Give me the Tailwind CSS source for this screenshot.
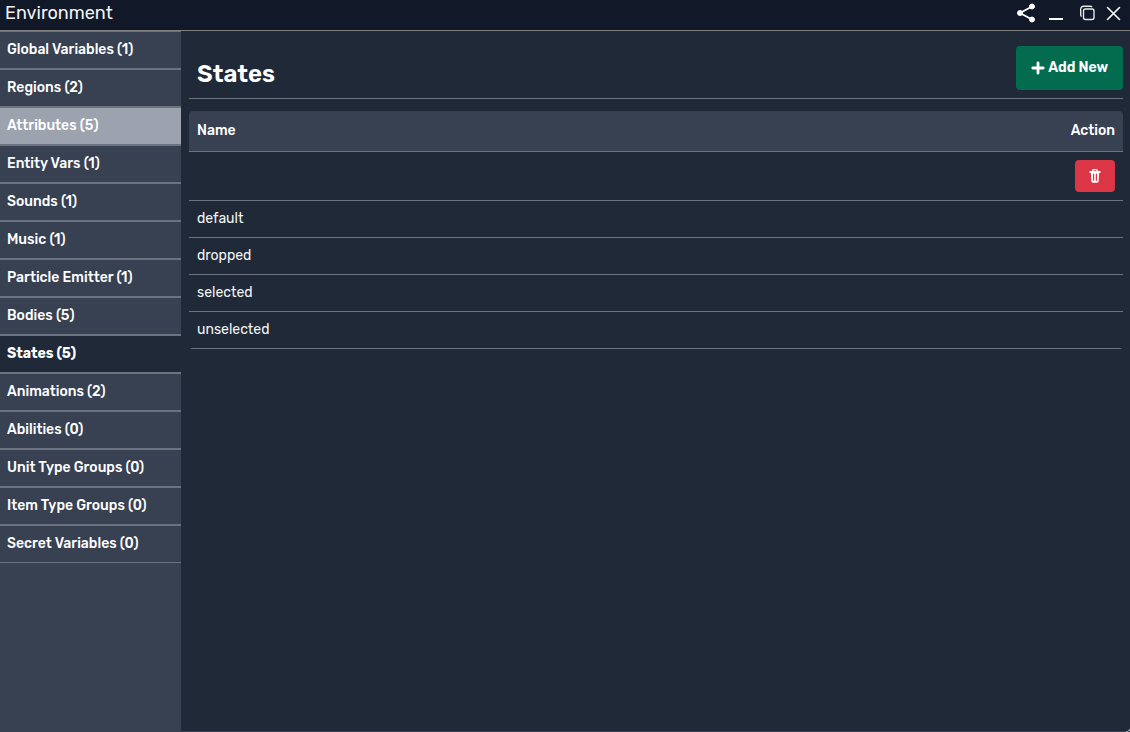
<!DOCTYPE html>
<html lang="en">
<head>
<meta charset="utf-8">
<title>Environment</title>
<script src="https://cdn.jsdelivr.net/npm/@tailwindcss/browser@4"></script>
</head>
<body class="flex min-h-screen flex-col border-b border-[#374151] bg-[#1f2937] font-['Rubik','Roboto',sans-serif] text-sm text-white">
<header class="flex h-[31px] items-center justify-between border-b border-[#808080] bg-[#111827] pr-2 pl-[5px]">
  <h1 class="pb-1 text-lg leading-6 text-gray-100">Environment</h1>
  <div class="flex items-center pb-1">
    <button type="button" aria-label="Share" class="mr-3"><svg class="h-5 w-5" viewBox="0 0 20 20" fill="white" stroke="white"><path d="M16 3.500 4 10l12 6.500" fill="none" stroke-width="1.800"/><circle cx="16" cy="3.500" r="2.500"/><circle cx="4" cy="10" r="2.500"/><circle cx="16" cy="16.500" r="2.500"/></svg></button>
    <button type="button" aria-label="Minimize" class="mr-4"><svg class="h-5 w-4" viewBox="0 0 16 20"><path d="M1 16h14" stroke="white" stroke-width="2"/></svg></button>
    <button type="button" aria-label="Maximize" class="mr-2.5"><svg class="h-4 w-4" viewBox="0 0 16 16" fill="none" stroke="#e5e7eb" stroke-width="1.4"><rect x="3.5" y="4" width="10.5" height="10.5" rx="2"/><path d="M1.5 11.5A2 2 0 0 1 .7 10V4.2a3 3 0 0 1 3-3h6.500a2 2 0 0 1 1.800 1"/></svg></button>
    <button type="button" aria-label="Close"><svg class="h-4 w-4" viewBox="0 0 16 16" stroke="white" stroke-width="1.6" stroke-linecap="round"><path d="M1.500 2.500l12 12M13.500 2.500l-12 12"/></svg></button>
  </div>
</header>
<div class="flex flex-1">
  <nav class="w-[181px] shrink-0 bg-[#374151] *:block *:h-[38px] *:border-y *:border-[#6b7280] *:pl-[7px] *:leading-9">
    <a href="#" class="font-medium">Global Variables (1)</a>
    <a href="#" class="font-medium">Regions (2)</a>
    <a href="#" class="bg-[#9ca3af] font-medium">Attributes (5)</a>
    <a href="#" class="font-medium">Entity Vars (1)</a>
    <a href="#" class="font-medium">Sounds (1)</a>
    <a href="#" class="font-medium">Music (1)</a>
    <a href="#" class="font-medium">Particle Emitter (1)</a>
    <a href="#" class="font-medium">Bodies (5)</a>
    <a href="#" class="bg-[#1f2937] font-bold" aria-current="page">States (5)</a>
    <a href="#" class="font-medium">Animations (2)</a>
    <a href="#" class="font-medium">Abilities (0)</a>
    <a href="#" class="font-medium">Unit Type Groups (0)</a>
    <a href="#" class="font-medium">Item Type Groups (0)</a>
    <a href="#" class="font-medium">Secret Variables (0)</a>
  </nav>
  <main class="min-w-0 flex-1 pr-[7px] pl-2">
    <div class="flex items-start justify-between border-b border-[#6b7280] pt-[15px] pb-2">
      <h2 class="mt-3 ml-2 text-2xl font-semibold">States</h2>
      <button type="button" class="flex h-11 items-center gap-[3px] rounded bg-[#046c4e] px-[15px] font-semibold"><svg class="h-3.5 w-3.5" viewBox="0 0 14 14"><path d="M7 1.800v10.400M1.800 7h10.400" stroke="white" stroke-width="2.800" stroke-linecap="round"/></svg>Add New</button>
    </div>
    <div class="mt-3 overflow-hidden rounded">
      <table class="w-full border-separate border-spacing-0 text-gray-100 [&_td]:border-b [&_td]:border-[#6b7280] [&_td]:px-2 [&_th]:h-[41px] [&_th]:border-b [&_th]:border-[#6b7280] [&_th]:bg-[#374151] [&_th]:px-2 [&_th]:pb-px [&_th]:font-medium [&_th]:text-white">
        <thead><tr><th class="text-left">Name</th><th class="text-right">Action</th></tr></thead>
        <tbody>
          <tr class="h-[49px]"><td></td><td><button type="button" aria-label="Delete" class="ml-auto flex h-8 w-10 items-center justify-center rounded bg-[#dc3545]"><svg class="h-4 w-4" viewBox="0 0 16 16" fill="none" stroke="white" stroke-linejoin="round" stroke-linecap="round"><path d="M3.200 4h9.600" stroke-width="1.800"/><path d="M5.700 3.500V2.600q0-1 1-1h2.600q1 0 1 1v.9" stroke-width="1.400"/><path d="M3.800 4h8.400l-.6 9.300q-.1 1.400-1.400 1.400H5.800q-1.300 0-1.400-1.400z" fill="white" stroke="none"/><path d="M6.600 6.200v6M9.400 6.200v6" stroke="#dc3545" stroke-width="1.200"/></svg></button></td></tr>
          <tr class="h-[37px]"><td class="pb-px">default</td><td></td></tr>
          <tr class="h-[37px]"><td class="pb-px">dropped</td><td></td></tr>
          <tr class="h-[37px]"><td class="pb-px">selected</td><td></td></tr>
          <tr class="h-[37px]"><td class="pb-px">unselected</td><td></td></tr>
        </tbody>
      </table>
    </div>
  </main>
</div>
<svg class="fixed right-0 bottom-0 h-1 w-1" viewBox="0 0 4 4" stroke="#9ca3af"><path d="M0 3.5h2M2 2.5h2M3 1.5h1"/></svg>
</body>
</html>
